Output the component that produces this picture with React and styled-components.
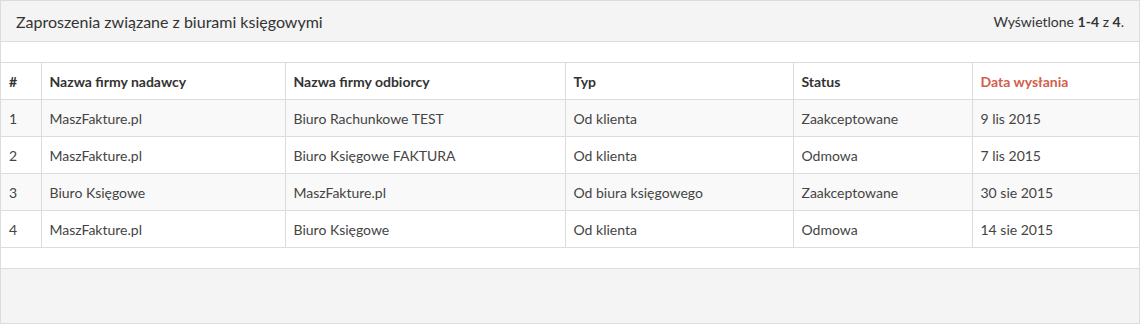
import React from 'react'
import styled, { createGlobalStyle } from 'styled-components'

const GlobalStyle = createGlobalStyle`
  body {
    margin: 0;
    background: #fff;
    font-family: Lato, "Liberation Sans", sans-serif;
    color: #444;
  }
`

const invitations = [
  { id: 1, sender: 'MaszFakture.pl', receiver: 'Biuro Rachunkowe TEST', type: 'Od klienta', status: 'Zaakceptowane', date: '9 lis 2015' },
  { id: 2, sender: 'MaszFakture.pl', receiver: 'Biuro Księgowe FAKTURA', type: 'Od klienta', status: 'Odmowa', date: '7 lis 2015' },
  { id: 3, sender: 'Biuro Księgowe', receiver: 'MaszFakture.pl', type: 'Od biura księgowego', status: 'Zaakceptowane', date: '30 sie 2015' },
  { id: 4, sender: 'MaszFakture.pl', receiver: 'Biuro Księgowe', type: 'Od klienta', status: 'Odmowa', date: '14 sie 2015' },
]

const columns = [
  { key: 'id', label: '#', width: 40 },
  { key: 'sender', label: 'Nazwa firmy nadawcy', width: 244 },
  { key: 'receiver', label: 'Nazwa firmy odbiorcy', width: 280 },
  { key: 'type', label: 'Typ', width: 228 },
  { key: 'status', label: 'Status', width: 179 },
  { key: 'date', label: 'Data wysłania', width: 167, sorted: true },
]

const Panel = styled.section`
  box-sizing: border-box;
  width: 1140px;
  border: 1px solid #dcdcdc;
  background: #fff;
`

const PanelHeader = styled.header`
  display: flex;
  align-items: center;
  justify-content: space-between;
  height: 40px;
  padding: 0 15px;
  background: #f4f4f4;
  border-bottom: 1px solid #dcdcdc;
`

const Title = styled.h3`
  margin: 0;
  font-size: 16px;
  font-weight: 400;
  color: #333;
`

const Summary = styled.div`
  font-size: 14px;
  color: #333;
  b { font-weight: 700; }
`

const TableWrap = styled.div`
  padding: 20px 0;
`

const Table = styled.table`
  width: 100%;
  border-collapse: collapse;
  table-layout: fixed;
  font-size: 14px;
`

const HeadCell = styled.th`
  box-sizing: border-box;
  height: 37px;
  padding: 0 8px;
  text-align: left;
  font-weight: 700;
  color: ${p => (p.$sorted ? '#d2604c' : '#333')};
  border: 1px solid #dcdcdc;
  &:first-child { border-left: none; }
  &:last-child { border-right: none; }
`

const Row = styled.tr`
  background: ${p => (p.$striped ? '#f9f9f9' : '#fff')};
`

const Cell = styled.td`
  box-sizing: border-box;
  height: 37px;
  padding: 0 8px;
  color: #444;
  border: 1px solid #dcdcdc;
  &:first-child { border-left: none; }
  &:last-child { border-right: none; }
`

const PanelFooter = styled.footer`
  height: 54px;
  background: #f4f4f4;
  border-top: 1px solid #dcdcdc;
`

export default function App() {
  return (
    <>
      <GlobalStyle />
      <Panel>
        <PanelHeader>
          <Title>Zaproszenia związane z biurami księgowymi</Title>
          <Summary>Wyświetlone <b>1-4</b> z <b>4</b>.</Summary>
        </PanelHeader>
        <TableWrap>
          <Table>
            <colgroup>
              {columns.map(c => <col key={c.key} style={{ width: c.width }} />)}
            </colgroup>
            <thead>
              <tr>
                {columns.map(c => (
                  <HeadCell key={c.key} $sorted={c.sorted}>{c.label}</HeadCell>
                ))}
              </tr>
            </thead>
            <tbody>
              {invitations.map((row, i) => (
                <Row key={row.id} $striped={i % 2 === 0}>
                  {columns.map(c => <Cell key={c.key}>{row[c.key]}</Cell>)}
                </Row>
              ))}
            </tbody>
          </Table>
        </TableWrap>
        <PanelFooter />
      </Panel>
    </>
  )
}
